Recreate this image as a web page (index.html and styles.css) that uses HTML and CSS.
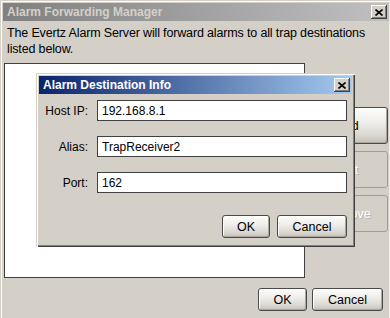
FILE: index.html
```html
<!DOCTYPE html>
<html lang="en">
<head>
    <meta charset="UTF-8">
    <title>Alarm Forwarding Manager</title>
    <link rel="stylesheet" href="styles.css">
</head>
<body>

    <div class="window">
        <div class="titlebar inactive">
            <span class="title">Alarm Forwarding Manager</span>
            <span class="close"><svg width="8" height="7" viewBox="0 0 8 7"><path d="M0.5 0.5 L7.5 6.5 M7.5 0.5 L0.5 6.5" stroke="#000" stroke-width="1.6" fill="none"/></svg></span>
        </div>

        <div class="body">
            <p class="intro">The Evertz Alarm Server will forward alarms to all trap destinations<br>listed below.</p>

            <div class="content">
                <div class="list"></div>
                <div class="side">
                    <button class="btn">Add</button>
                    <button class="btn" disabled>Edit</button>
                    <button class="btn" disabled>Remove</button>
                </div>
            </div>

            <div class="footer">
                <button class="btn ok">OK</button>
                <button class="btn cancel">Cancel</button>
            </div>
        </div>

        <!-- modal dialog sits over the manager window -->
        <div class="dialog">
            <div class="titlebar active">
                <span class="title">Alarm Destination Info</span>
                <span class="close"><svg width="8" height="7" viewBox="0 0 8 7"><path d="M0.5 0.5 L7.5 6.5 M7.5 0.5 L0.5 6.5" stroke="#000" stroke-width="1.6" fill="none"/></svg></span>
            </div>
            <div class="form">
                <label for="host">Host IP:</label>
                <input id="host" type="text" value="192.168.8.1">
                <label for="alias">Alias:</label>
                <input id="alias" type="text" value="TrapReceiver2">
                <label for="port">Port:</label>
                <input id="port" type="text" value="162">
            </div>
            <div class="dialog-buttons">
                <button class="btn ok">OK</button>
                <button class="btn cancel">Cancel</button>
            </div>
        </div>
    </div>

</body>
</html>
```

FILE: styles.css
```css
* {
    margin: 0;
    padding: 0;
    box-sizing: border-box;
    font-family: "Liberation Sans", Arial, sans-serif;
}

body {
    width: 390px;
    height: 318px;
    overflow: hidden;
    background: #d4d0c8;
}

/* Main window */
.window {
    position: relative;
    width: 390px;
    height: 318px;
    padding: 3px 1px 0 3px;
    background: #d4d0c8;
    box-shadow: inset 1px 1px #d4d0c8, inset 2px 2px #fff, inset -1px 0 #ecebe7;
}

.titlebar {
    height: 18px;
    display: flex;
    align-items: center;
    justify-content: space-between;
    padding: 0 2px 0 4px;
}

.titlebar.inactive {
    background: linear-gradient(to right, #808080, #c0c0c0);
}

.titlebar.active {
    background: linear-gradient(to right, #0a246a, #a6caf0);
}

.title {
    font-size: 12px;
    font-weight: bold;
    color: #d4d0c8;
    white-space: nowrap;
}

.titlebar.active .title {
    color: #fff;
}

.close {
    width: 16px;
    height: 14px;
    display: flex;
    align-items: center;
    justify-content: center;
    background: #d4d0c8;
    box-shadow: inset -1px -1px #404040, inset 1px 1px #fff, inset -2px -2px #808080;
}

.body {
    padding: 0 1px 0 1px;
}

.intro {
    margin: 4px 0 0 3px;
    font-size: 12.5px;
    letter-spacing: -0.15px;
    line-height: 16px;
    color: #000;
    white-space: nowrap;
}

.content {
    display: flex;
    margin-top: 6px;
}

.list {
    width: 301px;
    height: 215px;
    background: #fff;
    border: 1px solid #404040;
}

.side {
    margin-left: 2px;
    padding-top: 44px;
    display: flex;
    flex-direction: column;
    gap: 7px;
}

.side .btn {
    width: 81px;
    height: 37px;
}

/* Push buttons */
.btn {
    height: 23px;
    font-size: 12.5px;
    color: #000;
    border: 1px solid #4a4a4a;
    border-radius: 3px;
    background: linear-gradient(to bottom, #fdfdfc 0%, #efeeea 40%, #dcd9d3 75%, #c6c2ba 100%);
    box-shadow: inset 1px 1px #fff, inset -1px -1px #aaa69e;
}

.btn:disabled {
    color: #fff;
    border-color: #a29e96;
    background: #d4d0c8;
    box-shadow: none;
    text-shadow: 1px 1px #b8b4ac;
}

.ok {
    width: 49px;
}

.cancel {
    width: 71px;
}

.footer {
    display: flex;
    justify-content: flex-end;
    gap: 5px;
    margin: 10px 5px 0 0;
}

/* Alarm Destination Info dialog */
.dialog {
    position: absolute;
    left: 36px;
    top: 73px;
    width: 319px;
    height: 174px;
    padding: 3px;
    background: #d4d0c8;
    box-shadow: inset 1px 1px #d4d0c8, inset 2px 2px #fff,
                inset -1px -1px #404040, inset -2px -2px #808080;
}

.form {
    display: grid;
    grid-template-columns: 49px 250px;
    grid-auto-rows: 21px;
    column-gap: 9px;
    row-gap: 15px;
    padding-top: 6px;
}

.form label {
    font-size: 12px;
    text-align: right;
    align-self: center;
    color: #000;
}

.form input {
    height: 21px;
    border: 1px solid #404040;
    padding: 0 4px;
    font-size: 12px;
    color: #000;
    background: #fff;
    outline: none;
}

.dialog-buttons {
    display: flex;
    justify-content: flex-end;
    gap: 7px;
    margin: 22px 5px 0 0;
}

.dialog-buttons .ok {
    width: 48px;
}

.dialog-buttons .cancel {
    width: 70px;
}
```
